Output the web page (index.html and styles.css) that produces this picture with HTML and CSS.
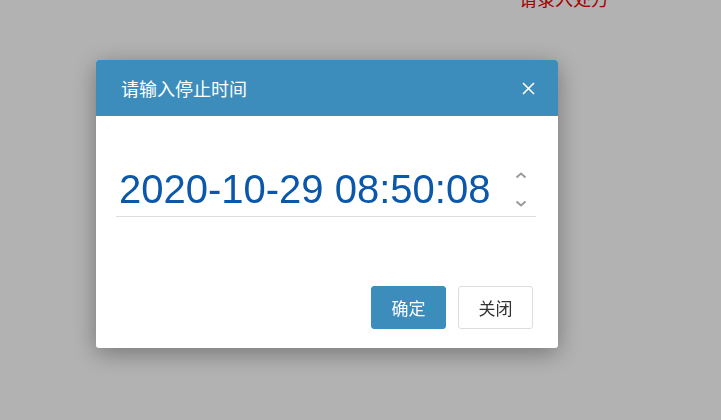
FILE: index.html
```html
<!DOCTYPE html>
<html lang="zh-CN">
<head>
    <meta charset="UTF-8">
    <meta name="viewport" content="width=device-width, initial-scale=1.0">
    <title>停止时间</title>
    <link rel="stylesheet" href="styles.css">
</head>
<body>

<div class="page">
    <div class="tip">请录入处方</div>
</div>

<div class="mask">
    <div class="dialog">
        <div class="dialog-header">
            <span class="dialog-title">请输入停止时间</span>
            <svg class="close" width="13" height="13" viewBox="0 0 13 13">
                <path d="M1 1 L12 12 M12 1 L1 12" stroke="#fff" stroke-width="1.6" fill="none"/>
            </svg>
        </div>
        <div class="dialog-body">
            <div class="time-input">
                <span class="time-value">2020-10-29 08:50:08</span>
                <div class="spinner">
                    <svg width="12" height="7" viewBox="0 0 12 7"><path d="M1.5 5.5 L6 1.5 L10.5 5.5" stroke="#9a9a9a" stroke-width="2" fill="none"/></svg>
                    <svg width="12" height="7" viewBox="0 0 12 7"><path d="M1.5 1.5 L6 5.5 L10.5 1.5" stroke="#9a9a9a" stroke-width="2" fill="none"/></svg>
                </div>
            </div>
        </div>
        <div class="dialog-footer">
            <button class="btn btn-primary">确定</button>
            <button class="btn btn-default">关闭</button>
        </div>
    </div>
</div>

</body>
</html>
```

FILE: styles.css
```css
body {
    margin: 0;
    background-color: #ffffff;
    font-family: "Liberation Sans", "Noto Sans CJK SC", sans-serif;
}
.page {
    height: 420px;
    padding-left: 519px;
}
.tip {
    color: #ee0000;
    font-size: 18px;
    line-height: 20px;
    margin-top: -10px;
}
.mask {
    position: fixed;
    top: 0;
    left: 0;
    right: 0;
    bottom: 0;
    background-color: rgba(0, 0, 0, 0.3);
    padding: 60px 0 0 96px;
}
.dialog {
    width: 462px;
    height: 288px;
    background-color: #ffffff;
    border-radius: 3px;
    box-shadow: 0 5px 25px rgba(0, 0, 0, 0.35);
    overflow: hidden;
}
.dialog-header {
    height: 56px;
    background-color: #3c8dbc;
    display: flex;
    align-items: center;
    justify-content: space-between;
    padding: 0 23px 0 25px;
}
.dialog-title {
    color: #ffffff;
    font-size: 18px;
}
.dialog-body {
    padding: 51px 22px 0 20px;
}
.time-input {
    display: flex;
    align-items: center;
    justify-content: space-between;
    border-bottom: 1px solid #dddddd;
    padding: 0 9px 5px 3px;
}
.time-value {
    color: #0b57aa;
    font-size: 40px;
    line-height: 44px;
}
.spinner {
    display: flex;
    flex-direction: column;
    gap: 21px;
    margin-top: 1px;
}
.spinner svg {
    display: block;
}
.dialog-footer {
    display: flex;
    justify-content: flex-end;
    gap: 12px;
    padding: 69px 25px 0 0;
}
.btn {
    width: 75px;
    height: 43px;
    border-radius: 3px;
    font-family: "Noto Sans CJK SC", sans-serif;
    font-size: 17px;
    cursor: pointer;
}
.btn-primary {
    background-color: #3c8dbc;
    border: 1px solid #3c8dbc;
    color: #ffffff;
}
.btn-default {
    background-color: #ffffff;
    border: 1px solid #dddddd;
    color: #333333;
}
```
